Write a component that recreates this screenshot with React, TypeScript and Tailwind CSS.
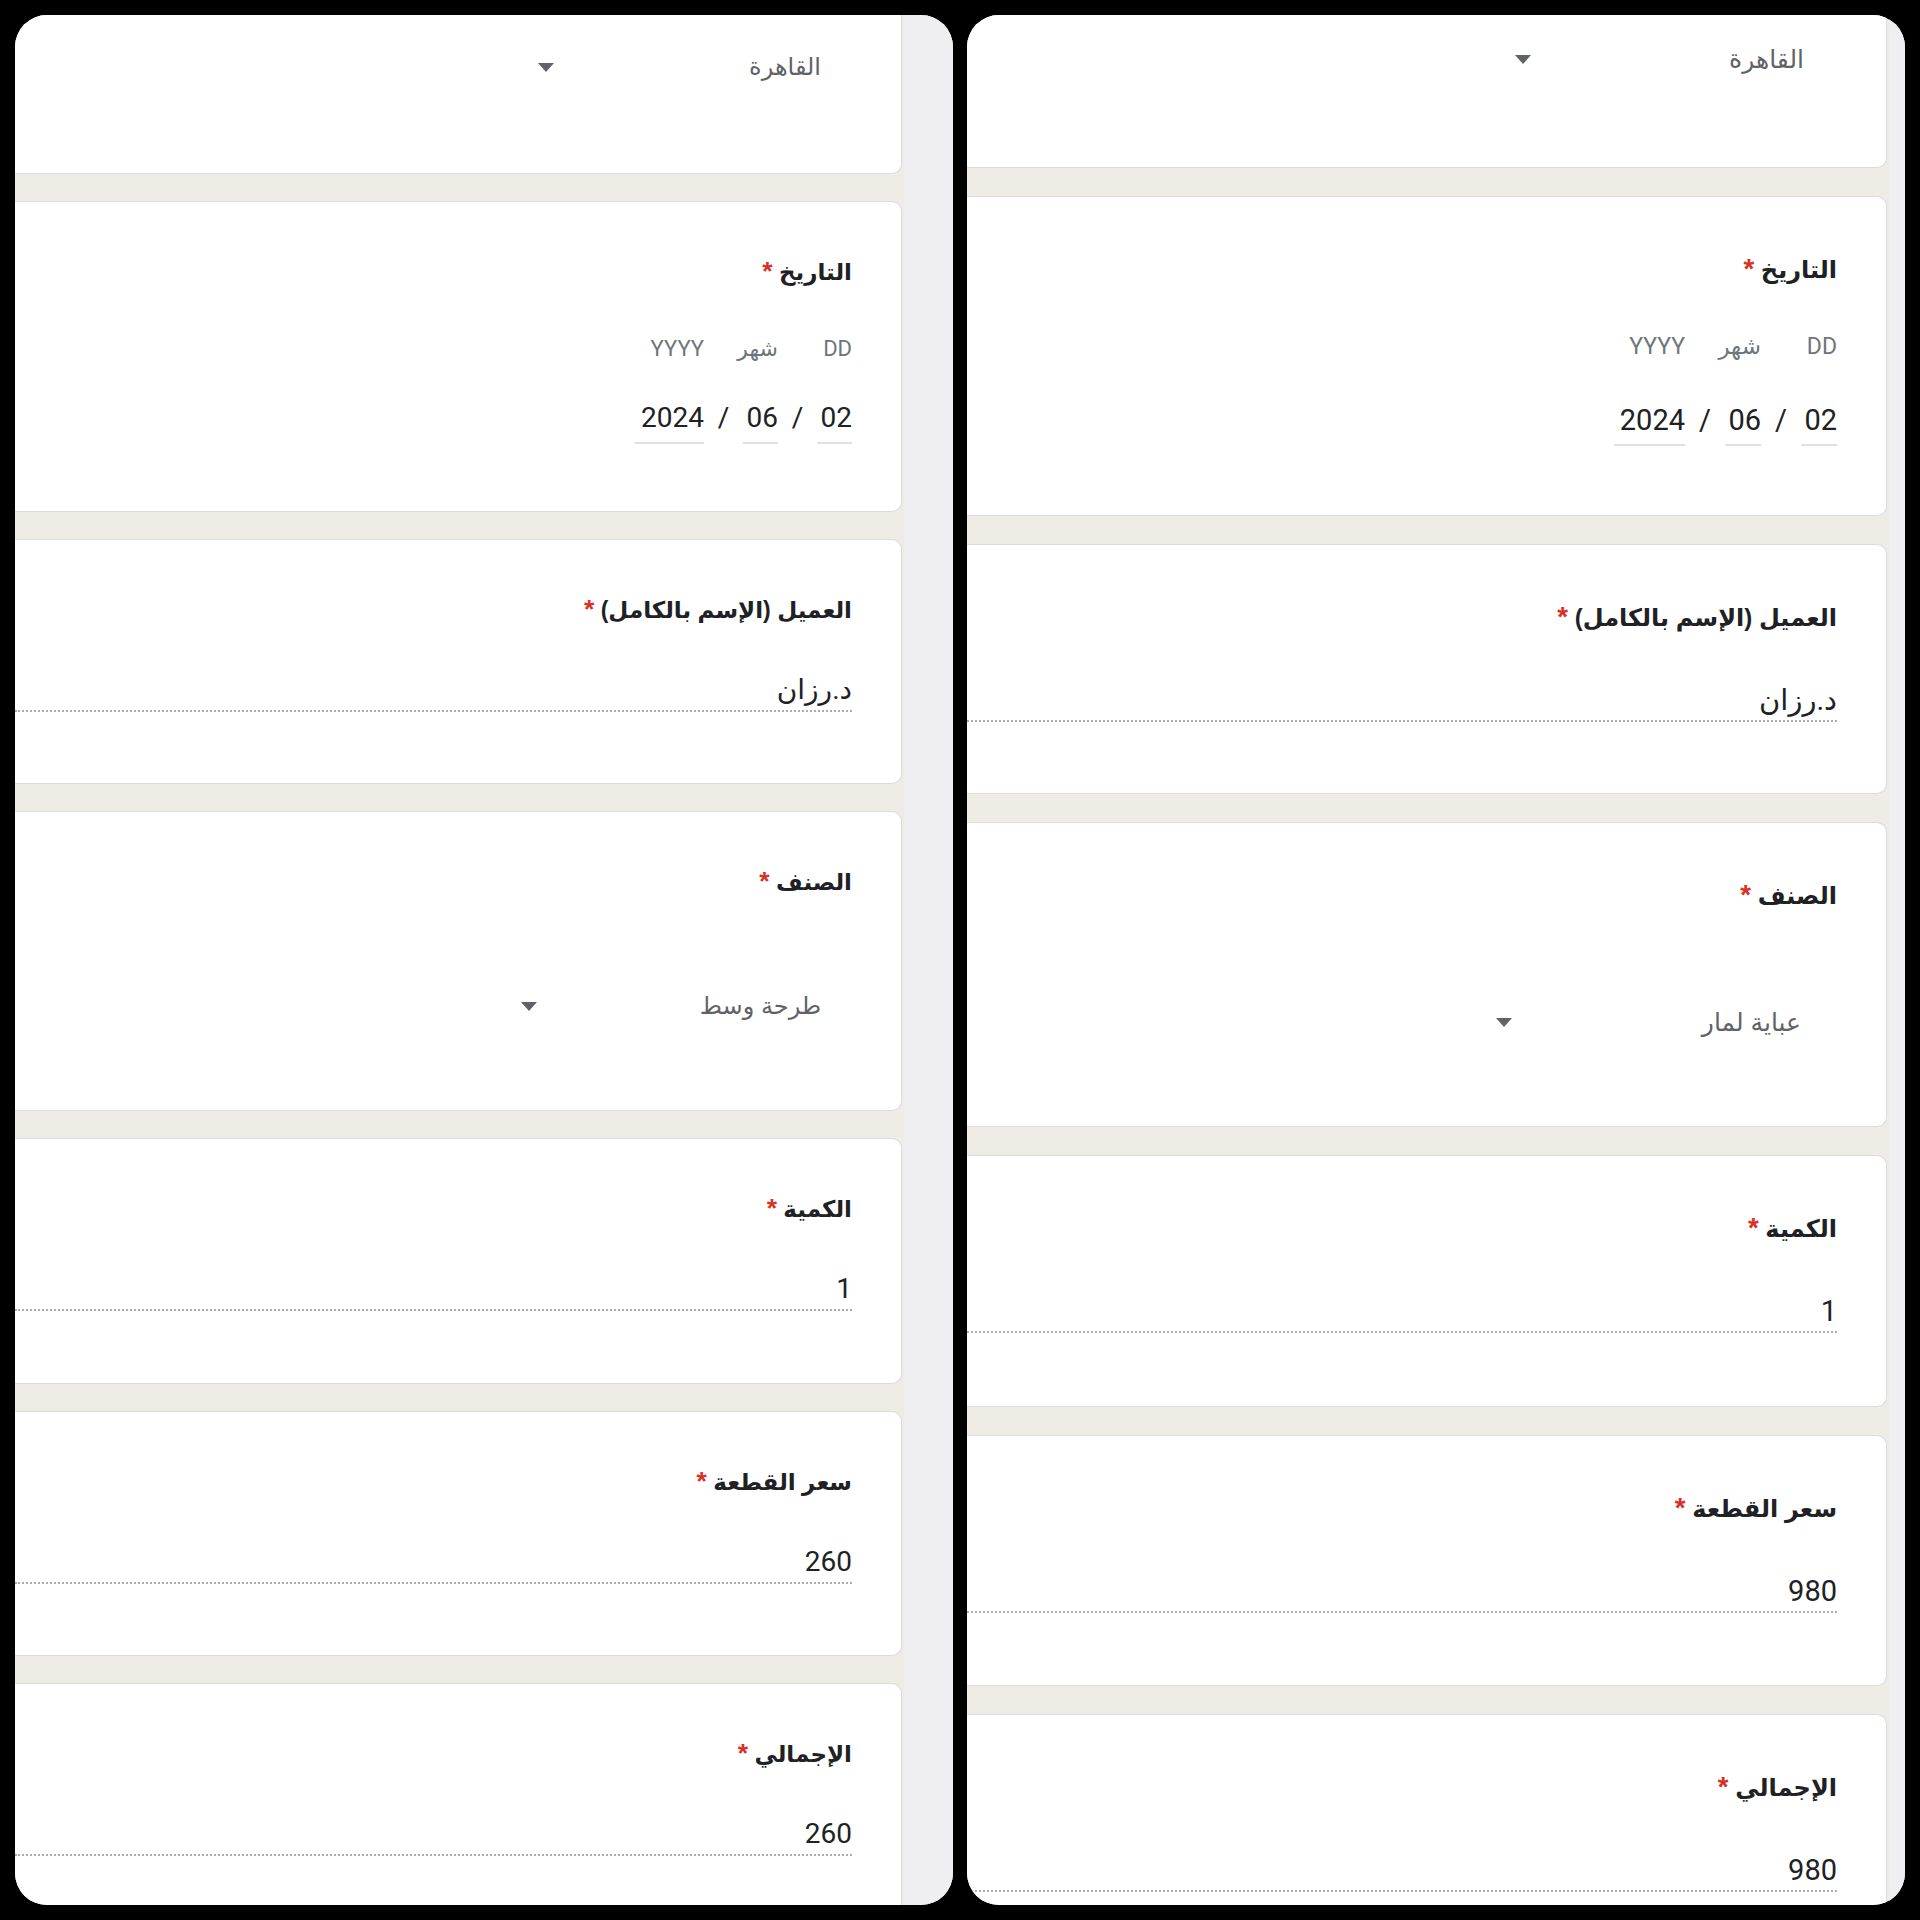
import clsx from "clsx";

const arabic = "font-['Liberation_Sans','DejaVu_Sans',sans-serif]";
const digits = "font-['Roboto','Liberation_Sans','DejaVu_Sans',sans-serif]";

type Sizes = {
  col: string;
  strip: string;
  gap: string;
  h1: string;
  hDate: string;
  hName: string;
  hItem: string;
  hQty: string;
  hPrice: string;
  pt: string;
  title: string;
  label: string;
  dateVal: string;
  sep: string;
  dd: string;
  mm: string;
  yy: string;
  val: string;
  ddMt: string;
  drop1: string;
  drop4: string;
  dropText: string;
};

const small: Sizes = {
  col: "w-[889px] pr-[2px]",
  strip: "w-[49px]",
  gap: "gap-[27px]",
  h1: "h-[159px] pt-[34px]",
  hDate: "h-[311px]",
  hName: "h-[245px]",
  hItem: "h-[300px]",
  hQty: "h-[246px]",
  hPrice: "h-[245px]",
  pt: "pt-[51px]",
  title: "text-[23px] leading-[36px]",
  label: "mt-[44px] text-[22px] leading-[30px]",
  dateVal: "mt-[36px] text-[28px] leading-[36px] pb-[6px]",
  sep: "w-[39px] text-[28px] leading-[36px] pb-[8px]",
  dd: "w-[35px]",
  mm: "w-[35px]",
  yy: "w-[69px]",
  val: "mt-[44px] text-[28px] leading-[36px] pb-[2px]",
  ddMt: "mt-[88px]",
  drop1: "mr-[31px] w-[283px]",
  drop4: "mr-[31px] w-[300px]",
  dropText: "text-[24px]",
};

const big: Sizes = {
  col: "w-[922px] pr-[2px]",
  strip: "w-[16px]",
  gap: "gap-[28px]",
  h1: "h-[153px] pt-[26px]",
  hDate: "h-[320px]",
  hName: "h-[250px]",
  hItem: "h-[305px]",
  hQty: "h-[252px]",
  hPrice: "h-[251px]",
  pt: "pt-[54px]",
  title: "text-[24px] leading-[36px]",
  label: "mt-[44px] text-[23px] leading-[30px]",
  dateVal: "mt-[40px] text-[29px] leading-[36px] pb-[6px]",
  sep: "w-[40px] text-[29px] leading-[36px] pb-[8px]",
  dd: "w-[36px]",
  mm: "w-[36px]",
  yy: "w-[71px]",
  val: "mt-[46px] text-[29px] leading-[36px] pb-[2px]",
  ddMt: "mt-[90px]",
  drop1: "mr-[33px] w-[289px]",
  drop4: "mr-[36px] w-[305px]",
  dropText: "text-[25px]",
};

function Card({ className, first, last, children }: { className?: string; first?: boolean; last?: boolean; children: React.ReactNode }) {
  return (
    <div
      className={clsx(
        "flex shrink-0 flex-col items-end border border-l-0 border-[#dadce0] bg-white pr-[49px]",
        first ? "rounded-br-[10px] border-t-0" : last ? "flex-1 rounded-tr-[10px] border-b-0" : "rounded-r-[10px]",
        className
      )}
    >
      {children}
    </div>
  );
}

function Title({ s, children }: { s: Sizes; children: React.ReactNode }) {
  return (
    <div dir="rtl" className={clsx(arabic, s.title, "font-bold text-[#202124]")}>
      {children} <span className="text-[1.15em] text-[#d93025]">*</span>
    </div>
  );
}

function Dropdown({ text, className, s }: { text: string; className: string; s: Sizes }) {
  return (
    <div dir="rtl" className={clsx("flex items-center justify-between leading-[36px]", className)}>
      <span className={clsx(arabic, s.dropText, "text-[#5f6368]")}>{text}</span>
      <span className="block h-0 w-0 border-x-[8px] border-t-[9px] border-x-transparent border-t-[#5f6368]" />
    </div>
  );
}

function Field({ s, value }: { s: Sizes; value: string }) {
  return (
    <div dir="rtl" className={clsx(digits, s.val, "w-full border-b-2 border-dotted border-[#a9adb2] text-[#202124]")}>
      {value}
    </div>
  );
}

function DateCol({ s, w, label, value }: { s: Sizes; w: string; label: string; value: string }) {
  return (
    <div className={clsx("flex flex-col", w)}>
      <span className={clsx(digits, s.label, "text-[#70757a]")}>{label}</span>
      <span className={clsx(digits, s.dateVal, "border-b-2 border-[#e0e0e0] text-[#202124]")}>{value}</span>
    </div>
  );
}

function Panel({ s, item, price }: { s: Sizes; item: string; price: string }) {
  return (
    <div className="flex h-[1890px] w-[938px] overflow-hidden rounded-[32px] bg-[#efebe5]">
      <div className={clsx("flex h-full flex-col", s.col, s.gap)}>
        <Card first className={s.h1}>
          <Dropdown s={s} text="القاهرة" className={s.drop1} />
        </Card>

        <Card className={clsx(s.hDate, s.pt)}>
          <Title s={s}>التاريخ</Title>
          <div dir="rtl" className="flex">
            <DateCol s={s} w={s.dd} label="DD" value="02" />
            <span className={clsx(digits, s.sep, "self-end text-center text-[#202124]")}>/</span>
            <DateCol s={s} w={s.mm} label="شهر" value="06" />
            <span className={clsx(digits, s.sep, "self-end text-center text-[#202124]")}>/</span>
            <DateCol s={s} w={s.yy} label="YYYY" value="2024" />
          </div>
        </Card>

        <Card className={clsx(s.hName, s.pt)}>
          <Title s={s}>العميل (الإسم بالكامل)</Title>
          <Field s={s} value="د.رزان" />
        </Card>

        <Card className={clsx(s.hItem, s.pt)}>
          <Title s={s}>الصنف</Title>
          <div className={s.ddMt}>
            <Dropdown s={s} text={item} className={s.drop4} />
          </div>
        </Card>

        <Card className={clsx(s.hQty, s.pt)}>
          <Title s={s}>الكمية</Title>
          <Field s={s} value="1" />
        </Card>

        <Card className={clsx(s.hPrice, s.pt)}>
          <Title s={s}>سعر القطعة</Title>
          <Field s={s} value={price} />
        </Card>

        <Card last className={s.pt}>
          <Title s={s}>الإجمالي</Title>
          <Field s={s} value={price} />
        </Card>
      </div>
      <div className={clsx("h-full shrink-0 bg-[#efeff1]", s.strip)} />
    </div>
  );
}

export default function App() {
  return (
    <main className="flex h-[1920px] w-[1920px] gap-[14px] bg-black p-[15px]">
      <Panel s={small} item="طرحة وسط" price="260" />
      <Panel s={big} item="عباية لمار" price="980" />
    </main>
  );
}
